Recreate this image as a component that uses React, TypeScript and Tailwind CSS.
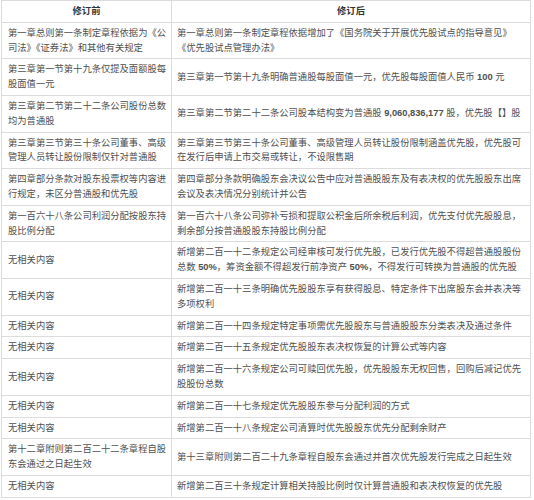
const rows: [React.ReactNode, React.ReactNode][] = [
  [
    "第一章总则第一条制定章程依据为《公司法》《证券法》和其他有关规定",
    "第一章总则第一条制定章程依据增加了《国务院关于开展优先股试点的指导意见》《优先股试点管理办法》",
  ],
  [
    "第三章第一节第十九条仅提及面额股每股面值一元",
    <>
      第三章第一节第十九条明确普通股每股面值一元，优先股每股面值人民币 <b className="font-semibold">100</b> 元
    </>,
  ],
  [
    "第三章第二节第二十二条公司股份总数均为普通股",
    <>
      第三章第二节第二十二条公司股本结构变为普通股 <b className="font-semibold">9,060,836,177</b> 股，优先股【】股
    </>,
  ],
  [
    "第三章第三节第三十条公司董事、高级管理人员转让股份限制仅针对普通股",
    "第三章第三节第三十条公司董事、高级管理人员转让股份限制涵盖优先股，优先股可在发行后申请上市交易或转让，不设限售期",
  ],
  [
    "第四章部分条款对股东投票权等内容进行规定，未区分普通股和优先股",
    "第四章部分条款明确股东会决议公告中应对普通股股东及有表决权的优先股股东出席会议及表决情况分别统计并公告",
  ],
  [
    "第一百六十八条公司利润分配按股东持股比例分配",
    "第一百六十八条公司弥补亏损和提取公积金后所余税后利润，优先支付优先股股息，剩余部分按普通股股东持股比例分配",
  ],
  [
    "无相关内容",
    <>
      新增第二百一十二条规定公司经审核可发行优先股，已发行优先股不得超普通股股份总数 <b className="font-semibold">50%</b>，筹资金额不得超发行前净资产 <b className="font-semibold">50%</b>，不得发行可转换为普通股的优先股
    </>,
  ],
  ["无相关内容", "新增第二百一十三条明确优先股股东享有获得股息、特定条件下出席股东会并表决等多项权利"],
  ["无相关内容", "新增第二百一十四条规定特定事项需优先股股东与普通股股东分类表决及通过条件"],
  ["无相关内容", "新增第二百一十五条规定优先股股东表决权恢复的计算公式等内容"],
  ["无相关内容", "新增第二百一十六条规定公司可赎回优先股，优先股股东无权回售，回购后减记优先股股份总数"],
  ["无相关内容", "新增第二百一十七条规定优先股股东参与分配利润的方式"],
  ["无相关内容", "新增第二百一十八条规定公司清算时优先股股东优先分配剩余财产"],
  [
    "第十二章附则第二百二十二条章程自股东会通过之日起生效",
    "第十三章附则第二百二十九条章程自股东会通过并首次优先股发行完成之日起生效",
  ],
  ["无相关内容", "新增第二百三十条规定计算相关持股比例时仅计算普通股和表决权恢复的优先股"],
];

export default function App() {
  return (
    <div className="w-[534px] h-[500px] overflow-hidden bg-white pl-[1px] font-['Liberation_Sans','Noto_Sans_CJK_SC',sans-serif] text-[9.3px] leading-[14.8px] text-[#505050]">
      <table className="w-[530px] border-collapse table-fixed">
        <colgroup>
          <col className="w-[170px]" />
          <col />
        </colgroup>
        <thead>
          {/* Header */}
          <tr>
            <th className="border border-[#dcdcdc] px-[6px] py-[3px] text-center font-bold text-[#333]">修订前</th>
            <th className="border border-[#dcdcdc] px-[6px] py-[3px] text-center font-bold text-[#333]">修订后</th>
          </tr>
        </thead>
        <tbody>
          {rows.map(([before, after], i) => (
            <tr key={i}>
              <td className="border border-[#dcdcdc] pl-[6px] pr-[2px] py-[3px] align-middle">{before}</td>
              <td className="border border-[#dcdcdc] pl-[5px] pr-[8px] py-[3px] align-middle">{after}</td>
            </tr>
          ))}
        </tbody>
      </table>
    </div>
  );
}
